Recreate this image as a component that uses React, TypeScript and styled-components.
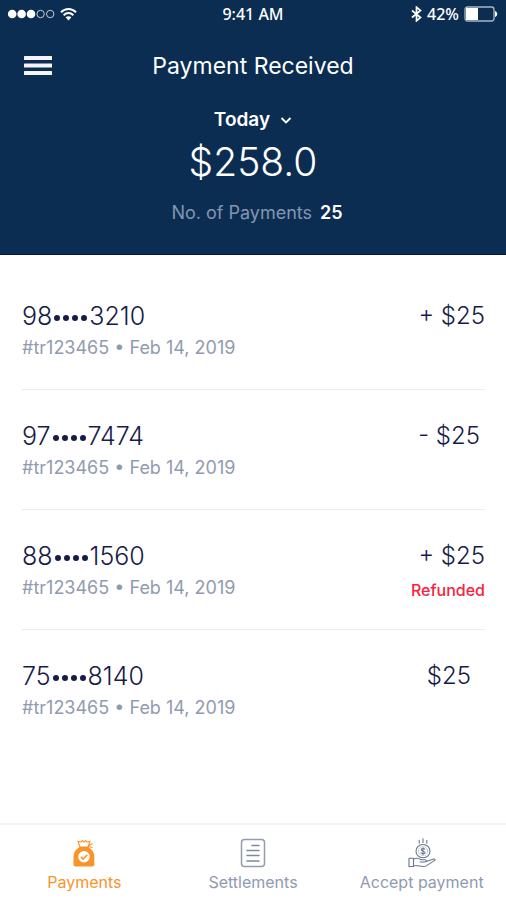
import React from "react";
import styled, { createGlobalStyle } from "styled-components";

const navy = "#0c2d52";
const ink = "#171b48";
const muted = "#8f9bb0";
const orange = "#f7952b";

const GlobalStyle = createGlobalStyle`
  *, *::before, *::after { box-sizing: border-box; }
  body { margin: 0; background: #fff; font-family: Inter, "Liberation Sans", sans-serif; }
  button, select { font: inherit; color: inherit; background: none; border: 0; padding: 0; margin: 0; cursor: pointer; }
  svg { display: block; flex: none; }
`;

const Screen = styled.div`
  min-height: 100vh;
  display: flex;
  flex-direction: column;
`;

const Header = styled.header`
  background: ${navy};
  color: #fff;
  padding-bottom: 29px;
  border-bottom: 1px solid #08124a;
`;

const StatusBar = styled.div`
  display: grid;
  grid-template-columns: 1fr auto 1fr;
  align-items: center;
  height: 28px;
  padding: 0 8px;
  font: 500 16px/20px "Noto Sans", sans-serif;
`;

const StatusGroup = styled.div<{ $end?: boolean }>`
  display: flex;
  align-items: center;
  justify-content: ${(p) => (p.$end ? "flex-end" : "flex-start")};
  gap: 5px;
`;

const TitleBar = styled.div`
  display: grid;
  grid-template-columns: 40px 1fr 40px;
  align-items: center;
  height: 76px;
  padding: 0 18px;
`;

const MenuButton = styled.button`
  display: grid;
  place-items: center;
  height: 40px;
`;

const Title = styled.h1`
  margin: 0;
  font-size: 23px;
  line-height: 28px;
  font-weight: 400;
  text-align: center;
`;

const Summary = styled.section`
  display: flex;
  flex-direction: column;
  align-items: center;
`;

const PeriodPicker = styled.label`
  display: flex;
  align-items: center;
  gap: 10px;
  height: 32px;
`;

const PeriodSelect = styled.select`
  appearance: none;
  field-sizing: content;
  font-size: 19px;
  line-height: 28px;
  font-weight: 600;
  option { color: ${ink}; }
`;

const Total = styled.p`
  margin: 0;
  font-size: 39px;
  line-height: 52px;
  font-weight: 300;
`;

const CountLine = styled.p`
  display: flex;
  gap: 8px;
  margin: 12px 0 0;
  padding-left: 8px;
  font-size: 18px;
  line-height: 25px;
  color: #8495af;
`;

const Count = styled.strong`
  color: #fff;
  font-weight: 600;
`;

const PaymentList = styled.ul`
  flex: 1;
  margin: 0;
  padding: 15px 21px 0 22px;
  list-style: none;
`;

const PaymentRow = styled.li`
  display: flex;
  justify-content: space-between;
  height: 120px;
  padding-top: 30px;
  border-bottom: 1px solid #e9ebef;
  &:last-child { border-bottom: 0; }
`;

const Account = styled.div`
  font-size: 25px;
  line-height: 32px;
  font-weight: 300;
  color: ${ink};
`;

const Dots = styled.span`
  display: inline-flex;
  gap: 3px;
  margin: 0 2px;
  vertical-align: middle;
`;

const Dot = styled.i`
  width: 6px;
  height: 6px;
  border-radius: 50%;
  background: ${ink};
`;

const Reference = styled.div`
  font-size: 18px;
  line-height: 32px;
  font-weight: 400;
  color: ${muted};
`;

const Side = styled.div<{ $inset: number }>`
  padding-right: ${(p) => p.$inset}px;
  text-align: right;
`;

const Amount = styled.div`
  font-size: 24px;
  line-height: 32px;
  font-weight: 300;
  color: ${ink};
`;

const Note = styled.div`
  padding-top: 2px;
  font-size: 16px;
  line-height: 32px;
  font-weight: 500;
  color: #f9223c;
`;

const TabBar = styled.nav`
  display: grid;
  grid-template-columns: repeat(3, 1fr);
  height: 77px;
  border-top: 2px solid #f3f4f6;
`;

const Tab = styled.button<{ $active?: boolean }>`
  display: flex;
  flex-direction: column;
  align-items: center;
  gap: 2px;
  padding-top: 13px;
  font-size: 16px;
  line-height: 24px;
  color: ${(p) => (p.$active ? orange : muted)};
  white-space: nowrap;
`;

const payments = [
  { start: "98", end: "3210", amount: "+ $25", inset: 0 },
  { start: "97", end: "7474", amount: "- $25", inset: 5 },
  { start: "88", end: "1560", amount: "+ $25", inset: 0, note: "Refunded" },
  { start: "75", end: "8140", amount: "$25", inset: 14 },
];

const SignalIcon = () => (
  <svg width="47" height="12" viewBox="0 0 47 12" fill="#fff" aria-hidden="true">
    {[4.2, 13.6, 23].map((x) => <circle key={x} cx={x} cy="6" r="4.3" />)}
    {[32.6, 42.2].map((x) => <circle key={x} cx={x} cy="6" r="3.7" fill="none" stroke="#c3ccd8" />)}
  </svg>
);

const WifiIcon = () => (
  <svg width="17" height="14" viewBox="0 0 17 14" fill="none" stroke="#fff" strokeWidth="2" aria-hidden="true">
    <path d="M1 5.2C5.200 .8 11.800 .8 16 5.200M3.700 8.200c2.700-2.800 6.900-2.800 9.600 0" />
    <path d="M8.500 13.500 5.600 10.300c1.600-1.500 4.200-1.500 5.800 0z" fill="#fff" stroke="none" />
  </svg>
);

const BluetoothIcon = () => (
  <svg width="11" height="16" viewBox="0 0 11 16" fill="none" stroke="#fff" strokeWidth="1.700" aria-hidden="true">
    <path d="M1 4.500 9.500 11.500 5.500 14.800V1.200L9.500 4.500 1 11.500" />
  </svg>
);

const BatteryIcon = () => (
  <svg width="34" height="16" viewBox="0 0 34 16" aria-hidden="true">
    <rect x="1" y="1" width="29" height="14" rx="2.500" fill="none" stroke="#aab7c7" strokeWidth="1.300" />
    <path d="M2 2h12v12H2z" fill="#fff" />
    <path d="M31 5c3 1 3 5 0 6z" fill="#fff" />
  </svg>
);

const MenuIcon = () => (
  <svg width="30" height="22" viewBox="0 0 30 22" fill="#f6f4ff" aria-hidden="true">
    <rect x="1" y="1" width="28" height="4" rx=".5" />
    <rect x="1" y="8.500" width="28" height="4" rx=".5" />
    <rect x="1" y="16" width="28" height="4" rx=".5" />
  </svg>
);

const ChevronIcon = () => (
  <svg width="12" height="8" viewBox="0 0 12 8" fill="none" stroke="#fff" strokeWidth="1.900" aria-hidden="true">
    <path d="m1.500 2 4.500 4.500L10.500 2" />
  </svg>
);

const BagIcon = () => (
  <svg width="24" height="30" viewBox="0 0 24 30" aria-hidden="true">
    <path d="M8 9 6 3.200l3 .8 1.200-1.500L12 4l1.800-1.500L15 4l3-.8L16 9z" fill="#fff" stroke={orange} strokeWidth="1.100" strokeLinejoin="round" />
    <path d="m16 8 4.500-2.500M16.500 8.500l4 1" stroke={orange} strokeWidth="1.100" />
    <path d="M7.500 9h9c3.500 2.300 5.800 5.500 5.800 9.500v8a2 2 0 0 1-2 2H3.500a2 2 0 0 1-2-2v-8c0-4 2.300-7.200 6-9.500z" fill={orange} />
    <circle cx="12" cy="18.800" r="5.700" fill="#fff" />
    <path d="m8.800 18.700 2.300 2.400 4.200-4.300" fill="none" stroke={orange} strokeWidth="1.500" />
  </svg>
);

const DocumentIcon = () => (
  <svg width="26" height="30" viewBox="0 0 26 30" fill="none" stroke="#7d899f" strokeWidth="1.500" aria-hidden="true">
    <rect x="1.500" y="1.500" width="23" height="27" rx="3" stroke="#929dae" />
    <path d="M12 7.500h7M7 12.500h12M7 17.500h12M7 23h12" strokeLinecap="round" />
  </svg>
);

const HandCoinIcon = () => (
  <svg width="28" height="30" viewBox="0 0 28 32" preserveAspectRatio="none" fill="none" stroke="#68758d" strokeWidth="1.100" strokeLinecap="round" strokeLinejoin="round" aria-hidden="true">
    <circle cx="15" cy="14" r="7" />
    <circle cx="15" cy="14" r="4.800" stroke="#a5afbf" strokeWidth=".6" />
    <path d="M17 12c-1.200-1.200-3.800-1-3.800.6 0 1.800 3.800 1 3.800 2.900 0 1.600-2.800 1.700-4 .4M15 10.300v7.400M15 .8v4M11.200 2.500v3M18.800 2.500v3" />
    <path d="M1 21.500h4.500v9H1zM5.500 22.500c3-1.500 5.500-1 7.500.7h4c1.700 0 1.700 2.300 0 2.300h-5M18.500 25l7-2.500c1.500-.3 2.200.8.800 1.700l-8 5.500c-2 1.100-6 .5-8 0H5.500" />
  </svg>
);

export default function App() {
  return (
    <Screen>
      <GlobalStyle />
      <Header>
        <StatusBar>
          <StatusGroup><SignalIcon /><WifiIcon /></StatusGroup>
          <span>9:41 AM</span>
          <StatusGroup $end><BluetoothIcon /><span>42%</span><BatteryIcon /></StatusGroup>
        </StatusBar>
        <TitleBar>
          <MenuButton type="button" aria-label="Menu"><MenuIcon /></MenuButton>
          <Title>Payment Received</Title>
        </TitleBar>
        <Summary>
          <PeriodPicker>
            <PeriodSelect aria-label="Period" defaultValue="Today">
              <option>Today</option>
            </PeriodSelect>
            <ChevronIcon />
          </PeriodPicker>
          <Total>$258.0</Total>
          <CountLine><span>No. of Payments</span><Count>25</Count></CountLine>
        </Summary>
      </Header>
      <PaymentList>
        {payments.map((p) => (
          <PaymentRow key={p.start}>
            <div>
              <Account>
                {p.start}
                <Dots aria-hidden="true"><Dot /><Dot /><Dot /><Dot /></Dots>
                {p.end}
              </Account>
              <Reference>#tr123465 • Feb 14, 2019</Reference>
            </div>
            <Side $inset={p.inset}>
              <Amount>{p.amount}</Amount>
              {p.note && <Note>{p.note}</Note>}
            </Side>
          </PaymentRow>
        ))}
      </PaymentList>
      <TabBar aria-label="Main">
        <Tab type="button" $active aria-current="page"><BagIcon />Payments</Tab>
        <Tab type="button"><DocumentIcon />Settlements</Tab>
        <Tab type="button"><HandCoinIcon />Accept payment</Tab>
      </TabBar>
    </Screen>
  );
}
